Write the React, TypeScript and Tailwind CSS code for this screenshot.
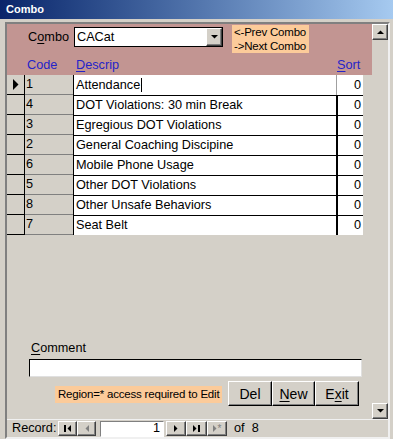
const raised =
  'bg-[#d4d0c8] border border-t-white border-l-white border-r-[#404040] border-b-[#404040] shadow-[inset_-1px_-1px_0_#808080]';

type Row = { code: string; descrip: string };

const rows: Row[] = [
  { code: '1', descrip: 'Attendance' },
  { code: '4', descrip: 'DOT Violations: 30 min Break' },
  { code: '3', descrip: 'Egregious DOT Violations' },
  { code: '2', descrip: 'General Coaching Discipine' },
  { code: '6', descrip: 'Mobile Phone Usage' },
  { code: '5', descrip: 'Other DOT Violations' },
  { code: '8', descrip: 'Other Unsafe Behaviors' },
  { code: '7', descrip: 'Seat Belt' },
];

function Tri({ dir, color = '#000' }: { dir: 'up' | 'down' | 'left' | 'right'; color?: string }) {
  const pts = {
    up: '0,4 7,4 3.5,0.5',
    down: '0,0 7,0 3.5,3.5',
    left: '4,0 4,7 0.5,3.5',
    right: '0,0 0,7 3.5,3.5',
  }[dir];
  const vertical = dir === 'up' || dir === 'down';
  return (
    <svg width={vertical ? 7 : 4} height={vertical ? 4 : 7} viewBox={vertical ? '0 0 7 4' : '0 0 4 7'}>
      <polygon points={pts} fill={color} />
    </svg>
  );
}

function NavButton({ children, w }: { children: React.ReactNode; w: string }) {
  return <div className={`${raised} ${w} h-[15px] flex items-center justify-center gap-[1px]`}>{children}</div>;
}

function DetailRow({ row, index }: { row: Row; index: number }) {
  const current = index === 0;
  return (
    <div className="flex h-[20px]">
      <div className="w-[18px] border-r border-b border-black flex items-center justify-center">
        {current ? (
          <svg width="6" height="11" viewBox="0 0 6 11">
            <polygon points="0,0 0,11 5.5,5.5" fill="#000" />
          </svg>
        ) : null}
      </div>
      <div className="w-[48px] border-b border-[#808080] pl-[1px] flex items-center">{row.code}</div>
      <div
        className={`w-[263px] bg-white border-l border-black pl-[2px] flex items-center whitespace-nowrap ${
          current ? '' : 'border-t'
        }`}
      >
        {row.descrip}
        {current ? <span className="ml-[1px] w-[1px] h-[14px] bg-black" /> : null}
      </div>
      <div
        className={`w-[27px] bg-white pr-[2px] flex items-center justify-end ${
          current ? 'border-l border-l-[#a0a0a0]' : 'border-l-2 border-t border-black'
        }`}
      >
        0
      </div>
    </div>
  );
}

export default function App() {
  return (
    <div className="w-[393px] h-[439px] bg-[#d4d0c8] overflow-hidden font-['Liberation_Sans',Arial,sans-serif] text-[12.7px] leading-none text-black">
      <div className="h-[19px] flex items-center pl-[6px] bg-gradient-to-r from-[#0a246a] to-[#a6caf0] text-white font-bold text-[11px]">
        Combo
      </div>

      <div className="ml-[5px] mt-[3px] w-[385px] h-[417px] border-2 border-t-[#808080] border-l-[#808080] border-r-[#f0f0f0] border-b-[#f0f0f0] flex flex-col">
        <div className="flex h-[395px]">
          <div className="w-[365px] flex flex-col">
            {/* header */}
            <div className="h-[51px] bg-[#c29592] flex flex-col">
              <div className="h-[31px] flex items-start">
                <div className="w-[62px] h-[20px] mt-[3px] flex items-center justify-end">
                  C<span className="underline underline-offset-2">o</span>mbo
                </div>
                <div className="ml-[5px] mt-[3px] w-[149px] h-[20px] bg-white border border-black flex items-center">
                  <span className="pl-[2px] flex-1">CACat</span>
                  <div className={`${raised} w-[16px] h-[18px] flex items-center justify-center`}>
                    <Tri dir="down" />
                  </div>
                </div>
                <div className="ml-[9px] mt-[1px] w-[77px] h-[28px] bg-[#fccb9a] pl-[2px] flex flex-col justify-center gap-[1px] leading-[13px] whitespace-nowrap text-[11.5px] tracking-[-0.2px]">
                  <span>&lt;-Prev Combo</span>
                  <span>-&gt;Next Combo</span>
                </div>
              </div>
              <div className="h-[20px] flex items-center text-[#2424c8]">
                <span className="w-[20px]" />
                <span className="w-[49px]">Code</span>
                <span className="w-[261px]">
                  <span className="underline underline-offset-2">D</span>escrip
                </span>
                <span>
                  <span className="underline underline-offset-2">S</span>ort
                </span>
              </div>
            </div>

            {/* detail */}
            <div className="flex flex-col">
              {rows.map((r, i) => (
                <DetailRow key={r.code} row={r} index={i} />
              ))}
            </div>

            {/* footer */}
            <div className="flex-1 flex flex-col">
              <div className="ml-[24px] mt-[106px] h-[14px] flex items-center">
                <span className="underline underline-offset-2">C</span>omment
              </div>
              <div className="ml-[22px] mt-[4px] w-[333px] h-[18px] bg-white border border-t-black border-l-black border-r-[#e0e0e0] border-b-[#e0e0e0]" />
              <div className="mt-[4px] flex items-start">
                <div className="ml-[48px] mt-[5px] w-[167px] h-[17px] bg-[#fccb9a] pl-[3px] flex items-center whitespace-nowrap text-[11.5px] tracking-[-0.2px]">
                  Region=* access required to Edit
                </div>
                <div className="ml-[6px] flex text-[14px]">
                  <div className={`${raised} border-r-black border-b-black w-[44px] h-[25px] flex items-center justify-center`}>
                    Del
                  </div>
                  <div className={`${raised} border-r-black border-b-black w-[43px] h-[25px] flex items-center justify-center`}>
                    <span className="underline underline-offset-2">N</span>ew
                  </div>
                  <div className={`${raised} border-r-black border-b-black w-[44px] h-[25px] flex items-center justify-center`}>
                    E<span className="underline underline-offset-2">x</span>it
                  </div>
                </div>
              </div>
            </div>
          </div>

          {/* scrollbar */}
          <div className="w-[16px] flex flex-col bg-[#ebe9e4]">
            <div className={`${raised} h-[16px] flex items-center justify-center`}>
              <Tri dir="up" />
            </div>
            <div className="flex-1 bg-[radial-gradient(#ffffff_0.5px,#d4d0c8_0.6px)] bg-[length:2px_2px]" />
            <div className={`${raised} h-[16px] flex items-center justify-center`}>
              <Tri dir="down" />
            </div>
          </div>
        </div>

        {/* record navigation */}
        <div className="h-[18px] flex items-center border-t border-[#f0f0f0]">
          <span className="w-[51px] pl-[5px]">Record:</span>
          <NavButton w="w-[19px]">
            <span className="w-[2px] h-[7px] bg-black" />
            <Tri dir="left" />
          </NavButton>
          <NavButton w="w-[19px]">
            <Tri dir="left" color="#808080" />
          </NavButton>
          <div className="ml-[4px] w-[64px] h-[16px] bg-white border border-t-[#808080] border-l-[#808080] border-r-white border-b-white flex items-center justify-end pr-[3px]">
            1
          </div>
          <div className="ml-[2px] flex">
            <NavButton w="w-[20px]">
              <Tri dir="right" />
            </NavButton>
            <NavButton w="w-[21px]">
              <Tri dir="right" />
              <span className="w-[2px] h-[7px] bg-black" />
            </NavButton>
            <NavButton w="w-[20px]">
              <Tri dir="right" color="#808080" />
              <span className="text-[10px] text-[#808080] leading-none">*</span>
            </NavButton>
          </div>
          <span className="ml-[7px]">of&nbsp;&nbsp;8</span>
        </div>
      </div>
    </div>
  );
}
